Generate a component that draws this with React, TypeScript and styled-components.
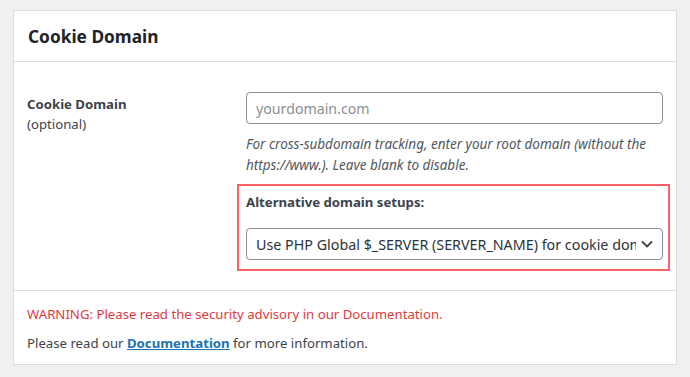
import React from "react";
import styled, { createGlobalStyle } from "styled-components";

const Global = createGlobalStyle`
  html, body { margin: 0; padding: 0; background: #f0f0f1; }
  body { font-family: "Noto Sans", "Open Sans", sans-serif; color: #3c434a; }
  * { box-sizing: border-box; }
`;

const Page = styled.div`
  padding: 10px 13px;
`;

const Card = styled.div`
  width: 664px;
  background: #fff;
  border: 1px solid #dcdcde;
`;

const Header = styled.div`
  height: 51px;
  display: flex;
  align-items: center;
  padding: 0 14px;
  border-bottom: 1px solid #dcdcde;
`;

const Title = styled.h2`
  margin: 0;
  font-size: 17.3px;
  font-weight: 700;
  color: #1d2327;
`;

const Body = styled.div`
  padding: 30px 13px 19px 13px;
  display: grid;
  grid-template-columns: 219px 1fr;
  border-bottom: 1px solid #dcdcde;
`;

const Label = styled.div`
  padding-top: 2px;
  font-size: 13.2px;
  line-height: 20px;
`;

const LabelStrong = styled.div`
  font-weight: 700;
`;

const Field = styled.div`
  display: flex;
  flex-direction: column;
`;

const TextInput = styled.input`
  width: 417px;
  height: 32px;
  border: 1px solid #8c8f94;
  border-radius: 4px;
  padding: 0 9px;
  font: inherit;
  font-size: 14.2px;
  color: #2c3338;
  background: #fff;
  &::placeholder { color: #8a8f94; }
`;

const Description = styled.p`
  margin: 10px 0 0;
  font-size: 13.5px;
  font-style: italic;
  line-height: 21px;
  color: #50575e;
  width: 420px;
`;

const Highlight = styled.div`
  margin: 8px 0 0 -9px;
  width: 433px;
  border: 2px solid #fb6366;
  padding: 6px 5px 9px 7px;
`;

const SubLabel = styled.div`
  font-size: 13.2px;
  font-weight: 700;
  line-height: 20px;
`;

const SelectWrap = styled.div`
  position: relative;
  margin-top: 16px;
  width: 417px;
`;

const Select = styled.select`
  appearance: none;
  -webkit-appearance: none;
  width: 100%;
  height: 32px;
  border: 1px solid #8c8f94;
  border-radius: 4px;
  padding: 0 26px 0 9px;
  font: inherit;
  font-size: 14.3px;
  color: #2c3338;
  background: #fff;
`;

const Chevron = styled.svg`
  position: absolute;
  right: 10px;
  top: 12px;
  pointer-events: none;
`;

const Footer = styled.div`
  padding: 13px 13px 11px;
  display: flex;
  flex-direction: column;
  gap: 9px;
  font-size: 13.2px;
  line-height: 20px;
`;

const Warning = styled.div`
  color: #e03b3f;
`;

const DocLink = styled.a`
  color: #2271b1;
  font-weight: 700;
  text-decoration: underline;
`;

export default function App() {
  return (
    <>
      <Global />
      <Page>
        <Card>
          <Header>
            <Title>Cookie Domain</Title>
          </Header>
          <Body>
            <Label>
              <LabelStrong>Cookie Domain</LabelStrong>
              <div>(optional)</div>
            </Label>
            <Field>
              <TextInput placeholder="yourdomain.com" />
              <Description>
                For cross-subdomain tracking, enter your root domain (without the https://www.). Leave blank to disable.
              </Description>
              <Highlight>
                <SubLabel>Alternative domain setups:</SubLabel>
                <SelectWrap>
                  <Select defaultValue="php">
                    <option value="php">Use PHP Global $_SERVER (SERVER_NAME) for cookie domain</option>
                  </Select>
                  <Chevron width="12" height="8" viewBox="0 0 12 8">
                    <path d="M1 1.5 L6 6.5 L11 1.5" fill="none" stroke="#3c434a" strokeWidth="1.8" />
                  </Chevron>
                </SelectWrap>
              </Highlight>
            </Field>
          </Body>
          <Footer>
            <Warning>WARNING: Please read the security advisory in our Documentation.</Warning>
            <div>
              Please read our <DocLink href="#">Documentation</DocLink> for more information.
            </div>
          </Footer>
        </Card>
      </Page>
    </>
  );
}
